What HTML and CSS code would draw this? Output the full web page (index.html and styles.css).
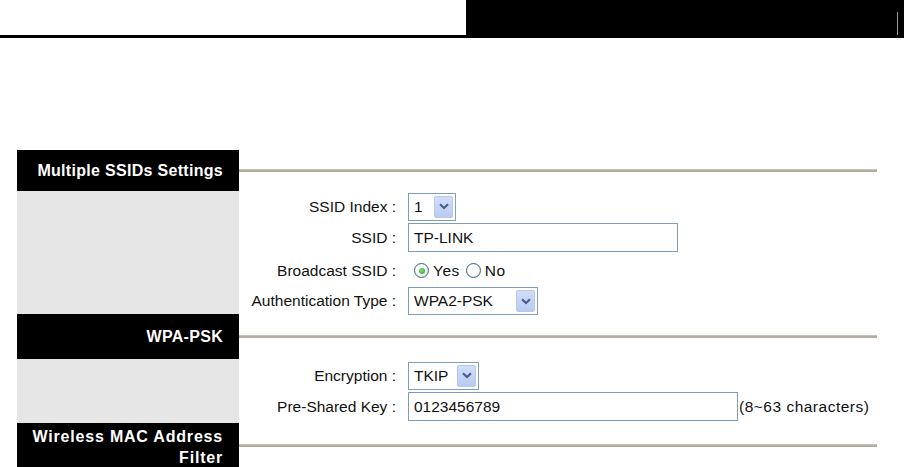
FILE: index.html
```html
<!DOCTYPE html>
<html lang="en">
<head>
<meta charset="utf-8">
<title>Multiple SSIDs Settings</title>
<link rel="stylesheet" href="styles.css">
</head>
<body>
<div class="topbar">
  <div class="topbar-left"></div>
  <div class="topbar-right"><div class="topbar-divider"></div></div>
</div>

<main class="panel">
  <div class="sec-head sec-head-first">
    <div class="sec-title">Multiple SSIDs Settings</div>
    <div class="sec-rule"></div>
  </div>
  <div class="sec-body">
    <div class="sec-side"></div>
    <div class="form form-ssid">
      <div class="label">SSID Index :</div>
      <div class="field">
        <div class="select select-index"><span class="select-value">1</span><span class="select-btn"><svg width="10" height="7" viewBox="0 0 10 7"><path d="M1 1.2 L5 5 L9 1.2" fill="none" stroke="#4b5f8c" stroke-width="2.2"/></svg></span></div>
      </div>
      <div class="label">SSID :</div>
      <div class="field"><div class="input input-ssid">TP-LINK</div></div>
      <div class="label">Broadcast SSID :</div>
      <div class="field radios">
        <span class="radio radio-on"><span class="radio-dot"></span></span><span class="radio-text">Yes</span>
        <span class="radio"></span><span class="radio-text">No</span>
      </div>
      <div class="label">Authentication Type :</div>
      <div class="field">
        <div class="select select-auth"><span class="select-value">WPA2-PSK</span><span class="select-btn"><svg width="10" height="7" viewBox="0 0 10 7"><path d="M1 1.2 L5 5 L9 1.2" fill="none" stroke="#4b5f8c" stroke-width="2.2"/></svg></span></div>
      </div>
    </div>
  </div>

  <div class="sec-head sec-head-mid">
    <div class="sec-title">WPA-PSK</div>
    <div class="sec-rule"></div>
  </div>
  <div class="sec-body">
    <div class="sec-side"></div>
    <div class="form form-psk">
      <div class="label">Encryption :</div>
      <div class="field">
        <div class="select select-enc"><span class="select-value">TKIP</span><span class="select-btn"><svg width="10" height="7" viewBox="0 0 10 7"><path d="M1 1.2 L5 5 L9 1.2" fill="none" stroke="#4b5f8c" stroke-width="2.2"/></svg></span></div>
      </div>
      <div class="label">Pre-Shared Key :</div>
      <div class="field"><div class="input input-psk">0123456789</div><span class="hint">(8~63 characters)</span></div>
    </div>
  </div>

  <div class="sec-head sec-head-last">
    <div class="sec-title">Wireless MAC Address<br>Filter</div>
    <div class="sec-rule"></div>
  </div>
</main>
</body>
</html>
```

FILE: styles.css
```css
html, body {
  margin: 0;
  padding: 0;
  background: #ffffff;
}

body {
  font-family: "Liberation Sans", Arial, sans-serif;
  font-size: 15.5px;
  color: #111111;
  overflow: hidden;
}

.topbar {
  display: flex;
  height: 38px;
}

.topbar-left {
  width: 466px;
  height: 35px;
  border-bottom: 3px solid #000000;
}

.topbar-right {
  flex: 1;
  background: #000000;
  display: flex;
  justify-content: flex-end;
}

.topbar-divider {
  width: 1px;
  margin: 12px 6px 3px 0;
  background: #9a9a9a;
}

.panel {
  margin: 112px 0 0 17px;
  width: 860px;
}

.sec-head {
  display: flex;
}

.sec-title {
  width: 222px;
  box-sizing: border-box;
  background: #000000;
  color: #ffffff;
  font-weight: bold;
  font-size: 16px;
  letter-spacing: 0.3px;
  text-align: right;
  padding-right: 16px;
  display: flex;
  align-items: center;
  justify-content: flex-end;
}

.sec-head-first .sec-title {
  height: 41px;
}

.sec-head-mid .sec-title {
  height: 45px;
}

.sec-head-last .sec-title {
  padding-top: 3px;
  line-height: 21px;
  height: 60px;
  letter-spacing: 0.8px;
  align-items: flex-start;
}

.sec-rule {
  flex: 1;
  height: 3px;
  align-self: center;
  background: #b4ad9f;
  border-top: 1px solid #c8c2b6;
  box-sizing: border-box;
}

.sec-head-last .sec-rule {
  align-self: flex-start;
  margin-top: 21px;
}

.sec-body {
  display: flex;
}

.sec-side {
  width: 222px;
  background: #e6e6e6;
}

.form {
  flex: 1;
  display: grid;
  grid-template-columns: 157px 1fr;
  column-gap: 12px;
  align-items: center;
}

.form-ssid {
  grid-template-rows: 31px 31px 35px 26px;
}

.form-psk {
  grid-template-rows: 31px 31px;
  padding: 1px 0;
}

.label {
  text-align: right;
  white-space: nowrap;
}

.field {
  display: flex;
  align-items: center;
}

.input {
  box-sizing: border-box;
  height: 29px;
  border: 1px solid #7f9db9;
  background: #ffffff;
  padding: 0 5px;
  display: flex;
  align-items: center;
}

.input-ssid {
  width: 270px;
}

.input-psk {
  width: 330px;
}

.hint {
  margin-left: 1px;
  letter-spacing: 0.5px;
}

.select {
  box-sizing: border-box;
  height: 28px;
  border: 1px solid #7f9db9;
  background: #ffffff;
  display: flex;
  align-items: stretch;
  padding: 2px 2px 2px 5px;
}

.select-value {
  flex: 1;
  display: flex;
  align-items: center;
}

.select-btn {
  width: 19px;
  box-sizing: border-box;
  border: 1px solid #b7c8ef;
  border-radius: 2px;
  background: linear-gradient(#d2def9, #b9cbf2);
  display: flex;
  align-items: center;
  justify-content: center;
}

.select-index {
  width: 48px;
}

.select-auth {
  width: 130px;
}

.select-enc {
  width: 71px;
}

.radios {
  padding-left: 6px;
}

.radio {
  width: 15px;
  height: 15px;
  box-sizing: border-box;
  border: 1px solid #3d5f80;
  border-radius: 50%;
  background: radial-gradient(circle at 40% 40%, #ffffff 40%, #dcdad2 100%);
  display: inline-flex;
  align-items: center;
  justify-content: center;
}

.radio-dot {
  width: 6px;
  height: 6px;
  border-radius: 50%;
  background: radial-gradient(circle at 40% 40%, #7fe07f, #22a022);
}

.radio-text {
  margin: 0 6px 0 4px;
  letter-spacing: 0.5px;
}
```
